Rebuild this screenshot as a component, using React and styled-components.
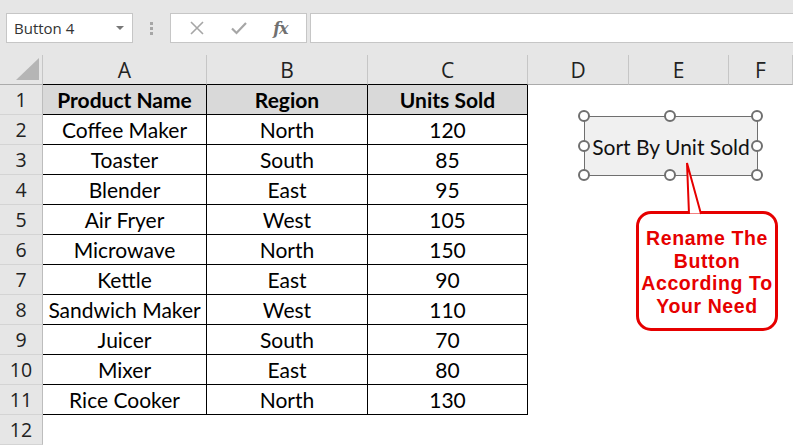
import React from "react";
import styled, { createGlobalStyle } from "styled-components";

const GlobalStyle = createGlobalStyle`
  html, body { margin: 0; padding: 0; background: #ffffff; }
  * { box-sizing: border-box; }
`;

const Page = styled.div`
  position: relative;
  width: 793px;
  height: 446px;
  overflow: hidden;
  background: #ffffff;
  font-family: Lato, "Open Sans", sans-serif;
`;

const Toolbar = styled.div`
  height: 55px;
  background: #e6e6e6;
  display: flex;
  align-items: flex-start;
  padding: 13px 0 0 6px;
`;

const NameBox = styled.div`
  width: 127px;
  height: 30px;
  background: #ffffff;
  border: 1px solid #c6c6c6;
  display: flex;
  align-items: center;
  justify-content: space-between;
  padding: 0 8px 0 7px;
  font-family: "Open Sans", sans-serif;
  font-size: 15px;
  color: #333333;
`;

const Caret = styled.span`
  width: 0;
  height: 0;
  border-left: 4px solid transparent;
  border-right: 4px solid transparent;
  border-top: 4px solid #777777;
`;

const Grip = styled.div`
  width: 37px;
  height: 30px;
  display: flex;
  flex-direction: column;
  align-items: center;
  justify-content: center;
  gap: 2px;
`;

const GripDot = styled.span`
  width: 3px;
  height: 3px;
  background: #a6a6a6;
`;

const FxBox = styled.div`
  width: 137px;
  height: 30px;
  background: #ffffff;
  border: 1px solid #c6c6c6;
  display: flex;
  align-items: center;
  justify-content: space-around;
  padding: 0 6px;
`;

const FxLabel = styled.span`
  font-family: "DejaVu Serif", "Liberation Serif", serif;
  font-style: italic;
  font-weight: 700;
  font-size: 16px;
  color: #707070;
  letter-spacing: -1px;
`;

const FormulaInput = styled.div`
  flex: 1;
  height: 30px;
  margin-left: 3px;
  background: #ffffff;
  border: 1px solid #c6c6c6;
  border-right: none;
`;

const Sheet = styled.div`
  display: grid;
  grid-template-columns: 43px 164px 161px 160px 101px 100px 1fr;
  grid-auto-rows: 30px;
`;

const Corner = styled.div`
  background: #e6e6e6;
  border-right: 1px solid #c6c6c6;
  border-bottom: 1px solid #ababab;
  display: flex;
  align-items: flex-end;
  justify-content: flex-end;
  padding: 0 3px 4px 0;
`;

const ColHeader = styled.div`
  background: #e6e6e6;
  border-right: 1px solid #c6c6c6;
  border-bottom: 1px solid ${(p) => (p.$table ? "#000000" : "#ababab")};
  display: flex;
  align-items: center;
  justify-content: center;
  font-family: "Open Sans", sans-serif;
  font-size: 21px;
  color: #222222;
  padding-top: 1px;
`;

const RowHeader = styled.div`
  background: #e6e6e6;
  border-right: 1px solid #bdbdbd;
  border-bottom: 1px solid #d4d4d4;
  display: flex;
  align-items: center;
  justify-content: center;
  font-family: "Open Sans", sans-serif;
  font-size: 19.5px;
  color: #222222;
`;

const Cell = styled.div`
  display: flex;
  align-items: center;
  justify-content: center;
  background: ${(p) => (p.$head ? "#d9d9d9" : "#ffffff")};
  border-right: ${(p) => (p.$table ? "1px solid #000000" : "none")};
  border-bottom: ${(p) => (p.$table ? "1px solid #000000" : "none")};
  font-family: Lato, "Open Sans", sans-serif;
  font-size: 21px;
  font-weight: ${(p) => (p.$head ? 700 : 400)};
  color: #000000;
  white-space: nowrap;
`;

const FormButton = styled.div`
  position: absolute;
  left: 584px;
  top: 116px;
  width: 174px;
  height: 60px;
  background: #f0f0f0;
  border: 1.5px solid #6f6f6f;
  display: flex;
  align-items: center;
  justify-content: center;
  font-family: Lato, "Open Sans", sans-serif;
  font-size: 21px;
  color: #111111;
  white-space: nowrap;
`;

const Handle = styled.span`
  position: absolute;
  width: 12px;
  height: 12px;
  border-radius: 50%;
  background: #ffffff;
  border: 2px solid #6f6f6f;
  left: ${(p) => p.$x - 6}px;
  top: ${(p) => p.$y - 6}px;
`;

const Callout = styled.div`
  position: absolute;
  left: 636px;
  top: 211px;
  width: 142px;
  height: 120px;
  border: 3px solid #e60000;
  border-radius: 15px;
  background: #ffffff;
  display: flex;
  flex-direction: column;
  align-items: center;
  justify-content: center;
  padding-top: 2px;
  font-family: "Liberation Sans", Arial, sans-serif;
  font-weight: 700;
  font-size: 19.5px;
  letter-spacing: 0.6px;
  line-height: 22.5px;
  color: #e60000;
  text-align: center;
`;

const Pointer = styled.svg`
  position: absolute;
  left: 680px;
  top: 160px;
  overflow: visible;
`;

const cols = ["A", "B", "C", "D", "E", "F"];
const data = [
  ["Product Name", "Region", "Units Sold"],
  ["Coffee Maker", "North", "120"],
  ["Toaster", "South", "85"],
  ["Blender", "East", "95"],
  ["Air Fryer", "West", "105"],
  ["Microwave", "North", "150"],
  ["Kettle", "East", "90"],
  ["Sandwich Maker", "West", "110"],
  ["Juicer", "South", "70"],
  ["Mixer", "East", "80"],
  ["Rice Cooker", "North", "130"],
];

const handles = [
  [584, 116], [670, 116], [757, 116],
  [584, 146], [757, 146],
  [584, 175], [670, 175], [757, 175],
];

export default function App() {
  const rows = [];
  for (let r = 0; r < 12; r++) {
    const rowData = data[r];
    rows.push(<RowHeader key={`rh${r}`}>{r + 1}</RowHeader>);
    for (let c = 0; c < 6; c++) {
      const inTable = rowData && c < 3;
      rows.push(
        <Cell key={`c${r}-${c}`} $table={inTable} $head={inTable && r === 0}>
          {inTable ? rowData[c] : ""}
        </Cell>
      );
    }
  }

  return (
    <Page>
      <GlobalStyle />
      <Toolbar>
        <NameBox>
          <span>Button 4</span>
          <Caret />
        </NameBox>
        <Grip>
          <GripDot />
          <GripDot />
          <GripDot />
        </Grip>
        <FxBox>
          <svg width="16" height="16" viewBox="0 0 16 16">
            <path d="M2 2 L14 14 M14 2 L2 14" stroke="#a6a6a6" strokeWidth="1.6" fill="none" />
          </svg>
          <svg width="18" height="16" viewBox="0 0 18 16">
            <path d="M2 8.5 L6.5 13 L16 3" stroke="#a6a6a6" strokeWidth="2.2" fill="none" />
          </svg>
          <FxLabel>fx</FxLabel>
        </FxBox>
        <FormulaInput />
      </Toolbar>
      <Sheet>
        <Corner>
          <svg width="23" height="22" viewBox="0 0 23 22">
            <polygon points="23,0 23,22 0,22" fill="#b5b5b5" />
          </svg>
        </Corner>
        {cols.map((c, i) => (
          <ColHeader key={c} $table={i < 3}>
            {c}
          </ColHeader>
        ))}
        {rows}
      </Sheet>

      <FormButton>Sort By Unit Sold</FormButton>
      {handles.map(([x, y], i) => (
        <Handle key={i} $x={x} $y={y} />
      ))}

      <Callout>
        <span>Rename The</span>
        <span>Button</span>
        <span>According To</span>
        <span>Your Need</span>
      </Callout>
      <Pointer width="30" height="60" viewBox="0 0 30 60">
        <polygon points="7,3 9,53.5 21,53.5" fill="#ffffff" />
        <polyline points="9,54 7,3 21,54" fill="none" stroke="#e60000" strokeWidth="2" />
      </Pointer>
    </Page>
  );
}
